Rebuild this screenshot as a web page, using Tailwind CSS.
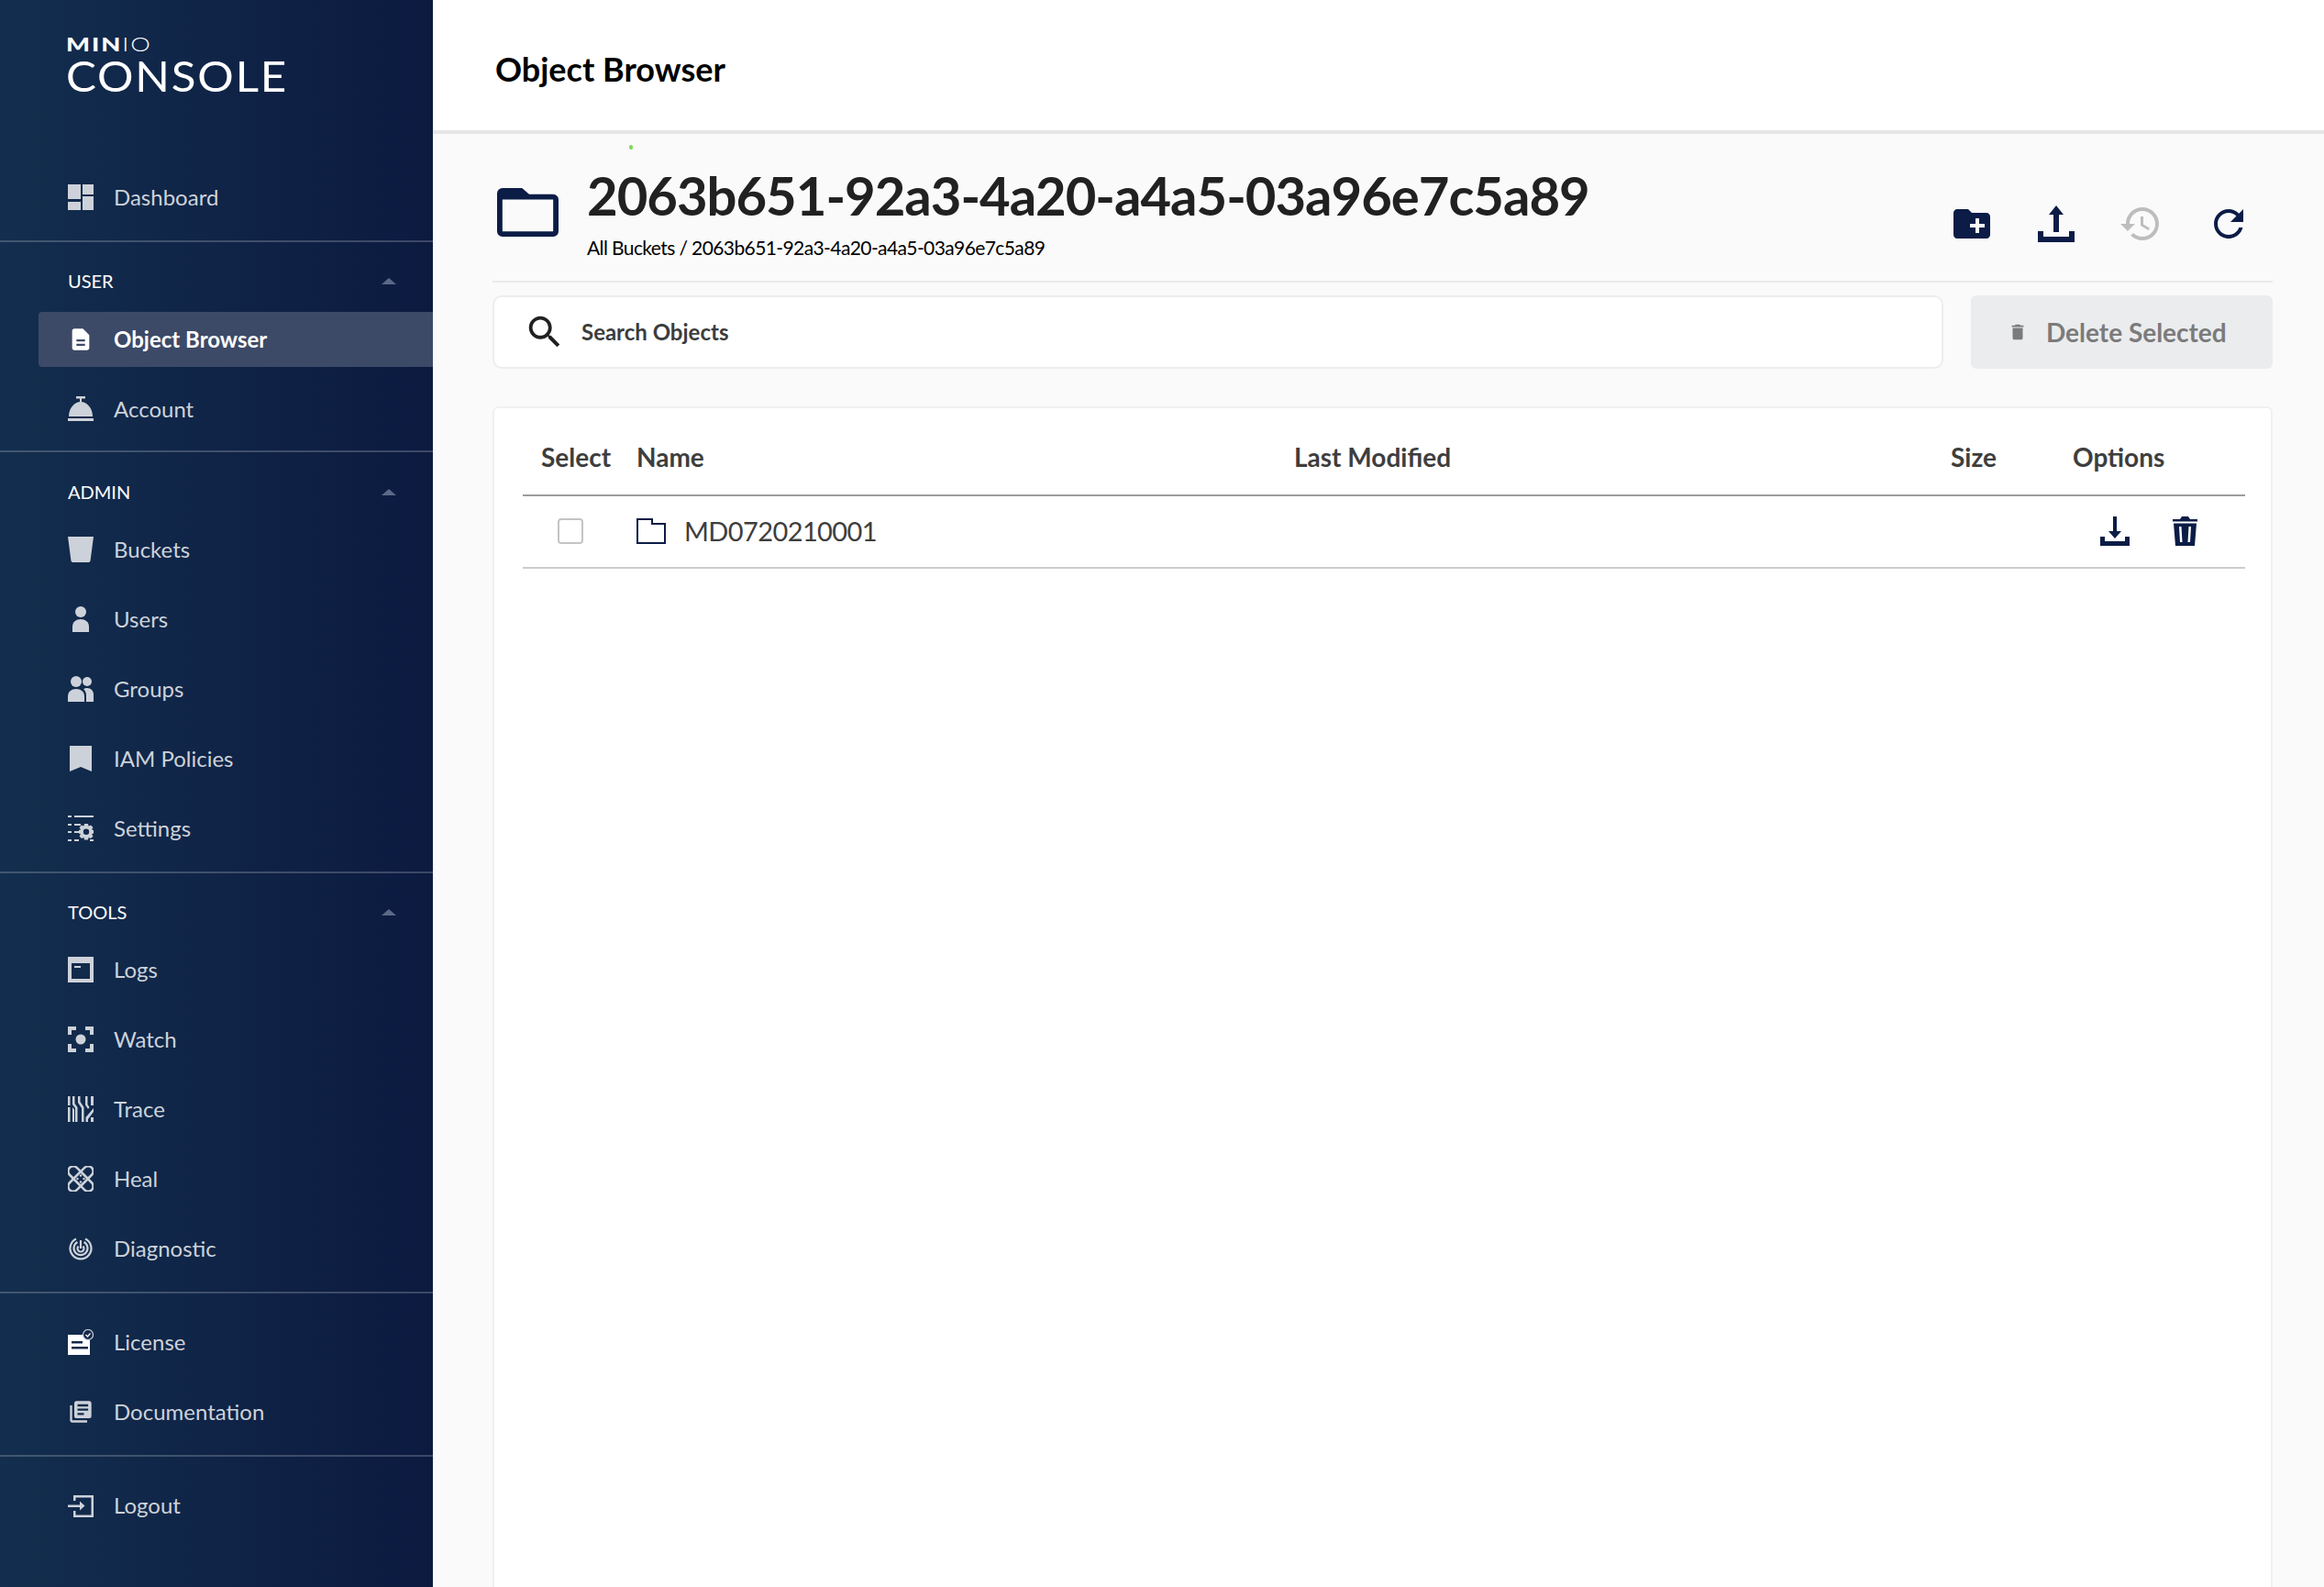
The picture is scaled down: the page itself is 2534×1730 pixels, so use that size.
<!DOCTYPE html>
<html lang="en">
<head>
  <meta charset="UTF-8">
  <title>MinIO Console - Object Browser</title>
  <script src="https://cdn.jsdelivr.net/npm/@tailwindcss/browser@4"></script>
</head>
<body class="h-[1730px] w-[2534px] overflow-hidden flex bg-[#fafafa] font-['Lato','Liberation_Sans',sans-serif]">
  <!-- sidebar -->
  <aside class="w-[472px] h-full shrink-0 bg-gradient-to-r from-[#132e4e] to-[#0c1a40] text-[#cdd2da] text-[24px]">
    <div class="h-[177px] pl-[72px] pt-[36px] text-white">
      <div class="h-[24px] leading-[24px] text-[21px] tracking-[1.5px] scale-x-[1.3] origin-left"><span class="font-black">MIN</span><span class="font-light">IO</span></div>
      <div class="h-[40px] mt-[2px] leading-[40px] text-[47px] font-normal tracking-[1.7px] scale-x-[1.05] origin-left">CONSOLE</div>
    </div>

    <a class="h-[76px] flex items-center pl-[74px] gap-[22px]">
      <svg class="w-[28px] h-[28px] fill-current" viewBox="0 0 28 28"><rect width="14" height="16"/><rect y="19" width="14" height="9"/><rect x="16" width="12" height="11"/><rect x="16" y="13" width="12" height="15"/></svg>
      Dashboard
    </a>
    <div class="mt-[9px] h-[2px] bg-white/20"></div>

    <div class="mt-[20px] h-[44px] flex items-center justify-between pl-[74px] pr-[40px] text-[20px] text-white">USER<span class="w-0 h-0 border-x-[8px] border-x-transparent border-b-[7px] border-b-[#5a6a86]"></span></div>
    <div class="mt-[4px] h-[76px] flex items-center">
      <a class="ml-[42px] w-full h-[60px] flex items-center pl-[32px] gap-[22px] bg-[#3c4a67] rounded-l-[4px] text-white font-bold">
        <svg class="w-[28px] h-[28px] fill-current" viewBox="0 0 24 24"><path fill-rule="evenodd" d="M14 2H6c-1.100 0-2 .9-2 2v16c0 1.100.9 2 2 2h12c1.100 0 2-.9 2-2V8l-6-6zm2 16H8v-2h8v2zm0-4H8v-2h8v2z"/></svg>
        Object Browser
      </a>
    </div>
    <a class="h-[76px] flex items-center pl-[74px] gap-[22px]">
      <svg class="w-[28px] h-[28px] fill-current" viewBox="0 0 28 28"><rect x="9" y="0" width="10" height="2.500"/><rect x="13" y="2" width="2" height="4"/><path d="M1 22C1 13 7 6 14 6s13 7 13 16z"/><rect y="24" width="28" height="3"/></svg>
      Account
    </a>
    <div class="mt-[7px] h-[2px] bg-white/20"></div>

    <div class="mt-[21px] h-[44px] flex items-center justify-between pl-[74px] pr-[40px] text-[20px] text-white">ADMIN<span class="w-0 h-0 border-x-[8px] border-x-transparent border-b-[7px] border-b-[#5a6a86]"></span></div>
    <div class="mt-[3px]">
      <a class="h-[76px] flex items-center pl-[74px] gap-[22px]">
        <svg class="w-[28px] h-[28px] fill-current" viewBox="0 0 28 28"><path d="M0 0h28l-3.500 26.500a2 2 0 0 1-2 1.500h-17a2 2 0 0 1-2-1.500z"/></svg>
        Buckets
      </a>
      <a class="h-[76px] flex items-center pl-[74px] gap-[22px]">
        <svg class="w-[28px] h-[28px] fill-current" viewBox="0 0 28 28"><circle cx="14" cy="6" r="6"/><path d="M5 28v-6c0-5 4-8 9-8s9 3 9 8v6z"/></svg>
        Users
      </a>
      <a class="h-[76px] flex items-center pl-[74px] gap-[22px]">
        <svg class="w-[28px] h-[28px] fill-current" viewBox="0 0 28 28"><circle cx="9" cy="6" r="6"/><circle cx="21" cy="6" r="5"/><path d="M0 28v-6c0-5 4-8 9-8s9 3 9 8v6z"/><path d="M20 28v-7c0-3-1-5-3-7 1-.5 3-1 4-1 4 0 7 3 7 7v8z"/></svg>
        Groups
      </a>
      <a class="h-[76px] flex items-center pl-[74px] gap-[22px]">
        <svg class="w-[28px] h-[28px] fill-current" viewBox="0 0 28 28"><path d="M2 0h24v28l-12-5-12 5z"/></svg>
        IAM Policies
      </a>
      <a class="h-[76px] flex items-center pl-[74px] gap-[22px]">
        <svg class="w-[28px] h-[28px] fill-current" viewBox="0 0 28 28"><path d="M0 0h4v2H0zM7 0h21v2H7zM0 9h4v2H0zM7 9h7v2H7zM0 17h4v2H0zM7 17h5v2H7zM0 26h4v2H0zM7 26h5v2H7zM24 26h4v2h-4z"/><path fill-rule="evenodd" d="M18 9h4l.6 2.500 2.400-1 2.500 2.500-1.500 2.200 2 .8v3.500l-2 .8 1.500 2.200-2.500 2.500-2.400-1-.6 2.500h-4l-.6-2.500-2.400 1-2.500-2.500 1.500-2.200-2-.8V16l2-.8-1.500-2.200 2.500-2.500 2.400 1zM20 14.500a3.200 3.200 0 1 0 0 6.400 3.200 3.200 0 0 0 0-6.400z"/></svg>
        Settings
      </a>
    </div>
    <div class="mt-[9px] h-[2px] bg-white/20"></div>

    <div class="mt-[20px] h-[44px] flex items-center justify-between pl-[74px] pr-[40px] text-[20px] text-white">TOOLS<span class="w-0 h-0 border-x-[8px] border-x-transparent border-b-[7px] border-b-[#5a6a86]"></span></div>
    <div class="mt-[3px]">
      <a class="h-[76px] flex items-center pl-[74px] gap-[22px]">
        <svg class="w-[28px] h-[28px] fill-current" viewBox="0 0 28 28"><path fill-rule="evenodd" d="M0 0h28v28H0zM4 7v17h20V7z"/><rect x="7" y="10" width="7" height="2"/></svg>
        Logs
      </a>
      <a class="h-[76px] flex items-center pl-[74px] gap-[22px]">
        <svg class="w-[28px] h-[28px] fill-current" viewBox="0 0 28 28"><path d="M0 0h9v4H4v5H0zM19 0h9v9h-4V4h-5zM0 19h4v5h5v4H0zM24 19h4v9h-9v-4h5z"/><circle cx="14" cy="14" r="5.500"/></svg>
        Watch
      </a>
      <a class="h-[76px] flex items-center pl-[74px] gap-[22px]">
        <svg class="w-[28px] h-[28px] fill-current" viewBox="0 0 28 28"><path d="M0 0h2.500v10h-2.500zM0 12h2.500v16H0zM5 0h2.500v8l3 4v16H8V13L5 9zM5 12l2 2.500V28H5zM11 0h2.500v6l4 6v16H15V13l-4-6zM19 0h2.500v9l2 3-1.500 2-3-4.500zM25 0h3v10h-3zM28 13v4l-6 8v3h-2.500v-5z"/><path d="M25 23h3v5h-3z"/></svg>
        Trace
      </a>
      <a class="h-[76px] flex items-center pl-[74px] gap-[22px]">
        <svg class="w-[28px] h-[28px] fill-none stroke-current" stroke-width="2.500" viewBox="0 0 28 28"><rect x="-3" y="8.500" width="34" height="11" rx="5.500" transform="rotate(45 14 14)"/><rect x="-3" y="8.500" width="34" height="11" rx="5.500" transform="rotate(-45 14 14)"/><rect x="8.500" y="8.500" width="11" height="11" transform="rotate(45 14 14)" fill="#12294b"/><circle cx="14" cy="10.500" r="1.200" fill="currentColor" stroke="none"/><circle cx="10.500" cy="14" r="1.200" fill="currentColor" stroke="none"/><circle cx="17.500" cy="14" r="1.200" fill="currentColor" stroke="none"/><circle cx="14" cy="17.500" r="1.200" fill="currentColor" stroke="none"/></svg>
        Heal
      </a>
      <a class="h-[76px] flex items-center pl-[74px] gap-[22px]">
        <svg class="w-[28px] h-[28px] fill-none stroke-current" stroke-width="2.200" viewBox="0 0 28 28"><path d="M9 3.500a11.500 11.500 0 1 0 10 0"/><path d="M10.500 7a7.500 7.500 0 1 0 7 0"/><path d="M14 5v9"/><path d="M11.500 11.500a3.500 3.500 0 1 0 5 0"/></svg>
        Diagnostic
      </a>
    </div>
    <div class="mt-[9px] h-[2px] bg-white/20"></div>

    <div class="mt-[15px]">
      <a class="h-[76px] flex items-center pl-[74px] gap-[22px]">
        <svg class="w-[28px] h-[28px]" viewBox="0 0 28 28"><path fill="#fff" fill-rule="evenodd" d="M0 6h24v22H0zM4 13v2.500h12V13zM4 19v2.500h18V19z"/><circle cx="22" cy="6" r="5.500" fill="#14294c" stroke="#cdd2da" stroke-width="1.200"/><path d="M19.500 6l2 2 3-3.500" fill="none" stroke="#fff" stroke-width="1.200"/></svg>
        License
      </a>
      <a class="h-[76px] flex items-center pl-[74px] gap-[22px]">
        <svg class="w-[28px] h-[28px] fill-current" viewBox="0 0 24 24"><path d="M4 6H2v14c0 1.100.9 2 2 2h14v-2H4V6zm16-4H8c-1.100 0-2 .9-2 2v12c0 1.100.9 2 2 2h12c1.100 0 2-.9 2-2V4c0-1.100-.9-2-2-2zm-1 9H9V9h10v2zm-4 4H9v-2h6v2zm4-8H9V5h10v2z"/></svg>
        Documentation
      </a>
    </div>
    <div class="mt-[9px] h-[2px] bg-white/20"></div>

    <a class="mt-[15px] h-[76px] flex items-center pl-[74px] gap-[22px]">
      <svg class="w-[28px] h-[28px] fill-current" viewBox="0 0 28 28"><path d="M6 3h22v24H6v-7h2.500v4.500h17v-19h-17V9H6z"/><path d="M0 13.500h13V9.500l5.500 5-5.500 5v-3.500H0z"/></svg>
      Logout
    </a>
  </aside>

  <!-- main -->
  <main class="flex-1 min-w-0 flex flex-col">
    <header class="h-[146px] shrink-0 bg-white border-b-[4px] border-[#e6e6e6] flex items-center pl-[68px] pt-[8px] text-[36px] font-bold text-black">Object Browser</header>

    <div class="relative flex-1 min-h-0 pl-[65px] pr-[56px] flex flex-col">
      <span class="absolute left-[214px] top-[12px] w-[4px] h-[5px] rounded-full bg-[#7ed957]"></span>

      <!-- bucket title -->
      <div class="h-[162px] shrink-0 border-b-[2px] border-[#eaeaea] flex">
        <svg class="ml-[5px] mt-[59px] w-[67px] h-[53px]" viewBox="0 2 69 55" preserveAspectRatio="none"><path fill="#0b1c46" fill-rule="evenodd" d="M6 2h22l8 7h27a6 6 0 0 1 6 6v36a6 6 0 0 1-6 6H6a6 6 0 0 1-6-6V8a6 6 0 0 1 6-6zM6 15v36h57V15z"/></svg>
        <div class="ml-[31px] flex-1">
          <div class="mt-[28px] h-[78px] leading-[78px] text-[58px] tracking-[-1px] font-bold text-[#212121]">2063b651-92a3-4a20-a4a5-03a96e7c5a89</div>
          <div class="mt-[4px] leading-[28px] text-[21px] tracking-[-0.6px] text-black">All Buckets / 2063b651-92a3-4a20-a4a5-03a96e7c5a89</div>
        </div>
        <div class="flex items-start mt-[74px] mr-[24px]">
          <svg class="w-[48px] h-[48px] fill-[#0b1c46]" viewBox="0 0 24 24"><path d="M20 6h-8l-2-2H4c-1.110 0-1.990.89-1.990 2L2 18c0 1.110.89 2 2 2h16c1.110 0 2-.89 2-2V8c0-1.110-.89-2-2-2zm-1 8h-3v3h-2v-3h-3v-2h3V9h2v3h3v2z"/></svg>
          <svg class="ml-[44px] w-[48px] h-[48px] fill-[#0b1c46]" viewBox="-4 -4 48 48"><path d="M20 0l8 10h-5v19h-6V10h-5zM0 28h6v6h28v-6h6v12H0z"/></svg>
          <svg class="ml-[44px] w-[48px] h-[48px] fill-[#bdbdbd]" viewBox="0 0 24 24"><path d="M13 3c-4.970 0-9 4.030-9 9H1l3.890 3.890.07.14L9 12H6c0-3.870 3.130-7 7-7s7 3.130 7 7-3.130 7-7 7c-1.930 0-3.680-.79-4.940-2.060l-1.420 1.420C8.270 19.990 10.510 21 13 21c4.970 0 9-4.030 9-9s-4.030-9-9-9zm-1 5v5l4.280 2.540.72-1.210-3.500-2.080V8H12z"/></svg>
          <svg class="ml-[48px] w-[48px] h-[48px] fill-[#0b1c46]" viewBox="0 0 24 24"><path d="M17.650 6.350C16.200 4.900 14.210 4 12 4c-4.420 0-7.990 3.580-7.990 8s3.570 8 7.990 8c3.730 0 6.840-2.550 7.730-6h-2.080c-.82 2.330-3.040 4-5.650 4-3.310 0-6-2.690-6-6s2.690-6 6-6c1.660 0 3.140.69 4.220 1.780L13 11h7V4l-2.350 2.350z"/></svg>
        </div>
      </div>

      <!-- search + delete -->
      <div class="mt-[14px] h-[80px] shrink-0 flex gap-[30px]">
        <div class="flex-1 bg-white border-[2px] border-[#ededed] rounded-[10px] flex items-center pl-[32px] gap-[17px] text-[24px] font-bold text-[#3c3c3c]">
          <svg class="w-[46px] h-[46px] fill-[#212121]" viewBox="0 0 24 24"><path d="M15.500 14h-.79l-.28-.27C15.410 12.590 16 11.110 16 9.500 16 5.910 13.090 3 9.500 3S3 5.910 3 9.500 5.910 16 9.500 16c1.610 0 3.090-.59 4.230-1.570l.27.28v.79l5 4.990L20.490 19l-4.990-5zm-6 0C7.010 14 5 11.990 5 9.500S7.010 5 9.500 5 14 7.010 14 9.500 11.990 14 9.500 14z"/></svg>
          Search Objects
        </div>
        <div class="w-[329px] bg-[#ebecee] rounded-[6px] flex items-center pl-[40px] gap-[20px] pb-[1px] text-[28px] font-bold text-[#7b7b7b]">
          <svg class="w-[22px] h-[22px] fill-[#7b7b7b]" viewBox="0 0 24 24"><path d="M6 19c0 1.100.9 2 2 2h8c1.100 0 2-.9 2-2V7H6v12zM19 4h-3.500l-1-1h-5l-1 1H5v2h14V4z"/></svg>
          Delete Selected
        </div>
      </div>

      <!-- table -->
      <div class="mt-[41px] flex-1 bg-white border-[2px] border-[#f0f0f0] rounded-t-[6px] -mb-[20px] pl-[31px] pr-[28px]">
        <div class="h-[96px] grid grid-cols-[124px_717px_716px_133px_1fr] items-center border-b-[2px] border-[#9c9c9c] pt-[32px] pb-[22px] text-[28px] font-bold text-[#3e3e3e]">
          <span class="pl-[20px]">Select</span><span>Name</span><span>Last Modified</span><span>Size</span><span>Options</span>
        </div>
        <div class="h-[79px] grid grid-cols-[124px_717px_716px_133px_1fr] items-center border-b-[2px] border-[#cccccc] pb-[2px] text-[29px] text-[#3e3e3e]">
          <span class="pl-[38px] flex"><span class="w-[28px] h-[28px] rounded-[4px] border-[2px] border-[#c4c4c4]"></span></span>
          <span class="flex items-center gap-[20px] tracking-[-0.6px]">
            <svg class="w-[32px] h-[28px]" viewBox="0 0 32 28"><path fill="none" stroke="#0b1c46" stroke-width="2" d="M1 1h16v5h14v21H1z"/></svg>
            MD0720210001
          </span>
          <span></span><span></span>
          <span class="flex items-center pl-[30px] gap-[47px]">
            <svg class="w-[32px] h-[32px] fill-[#0b1c46]" viewBox="0 0 32 32"><path d="M14 0h4v16h5l-7 8-7-8h5zM0 22h5v5h22v-5h5v10H0z"/></svg>
            <svg class="w-[27px] h-[32px] fill-[#0b1c46]" viewBox="0 0 27 32"><path d="M0 3h8l2-3h7l2 3h8v2.500H0zM1 7.500h25L24 32H3zM7 11l1 17h2.500l-1-17zM17.500 11l-1 17H19l1-17z" fill-rule="evenodd"/></svg>
          </span>
        </div>
      </div>
    </div>
  </main>
</body>
</html>
